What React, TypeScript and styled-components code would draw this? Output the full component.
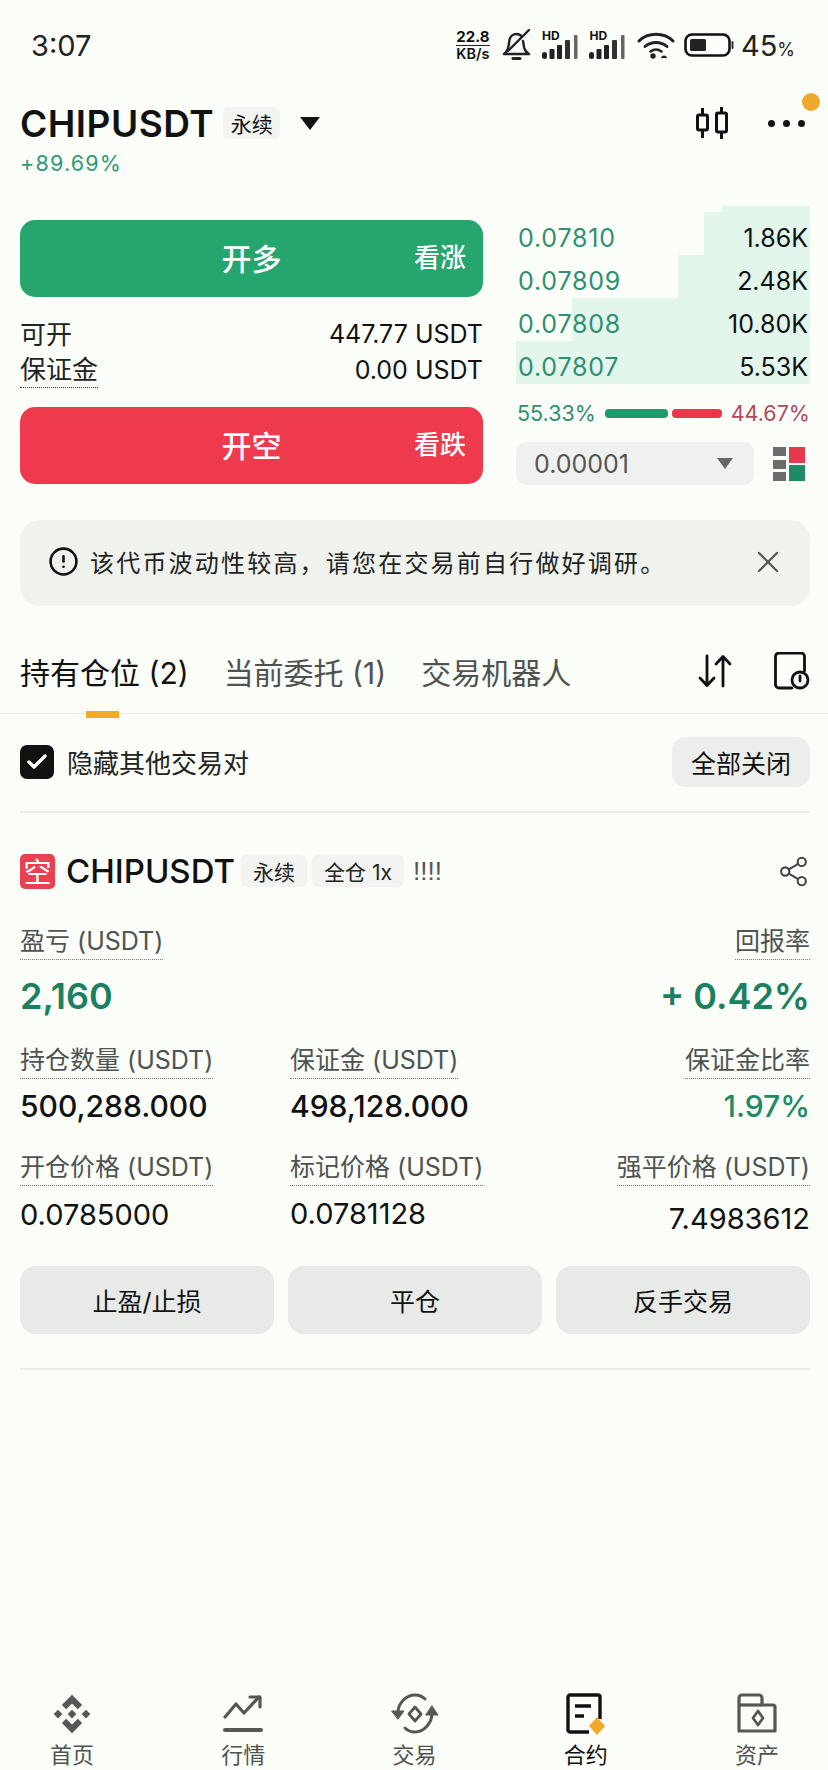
import React from 'react';
import styled, { createGlobalStyle } from 'styled-components';
import { Check, CircleAlert, Share2, X } from 'lucide-react';

const GlobalStyle = createGlobalStyle`
  html, body {
    margin: 0;
    padding: 0;
    background: #fbfdf9;
  }

  body {
    font-family: Inter, 'Noto Sans CJK SC', sans-serif;
    color: #111;
  }
`;

const GREEN = '#1f8a66';
const TEXT_GREY = '#4f5350';

const depthRows = [
  { price: '0.07810', size: '1.86K', depth: 36 },
  { price: '0.07809', size: '2.48K', depth: 45 },
  { price: '0.07808', size: '10.80K', depth: 81 },
  { price: '0.07807', size: '5.53K', depth: 100 },
];

const navItems = ['首页', '行情', '交易', '合约', '资产'];

function SignalIcon() {
  return (
    <svg width="38" height="24" viewBox="0 0 38 24">
      <rect x="0" y="17" width="5" height="7" rx="2.500" fill="#222" />
      <rect x="7.500" y="14" width="5" height="10" rx="1" fill="#222" />
      <rect x="15" y="10" width="5" height="14" rx="1" fill="#222" />
      <rect x="23" y="5" width="5" height="19" rx="1" fill="#333" />
      <rect x="32" y="0" width="3.500" height="24" rx="1" fill="#666" />
    </svg>
  );
}

function BellOffIcon() {
  return (
    <svg width="30" height="32" viewBox="0 0 30 32" fill="none" stroke="#222" strokeWidth="2.400" strokeLinecap="round" strokeLinejoin="round">
      <path d="M2 25c3-2 4-4 4.500-8l1-6c.6-3.500 3.500-6 7-6 2 0 3.500.7 5 2M21 12l1 6c.5 3 2 5 5 7H2" />
      <path d="M11 29.500h7" strokeWidth="3" />
      <path d="M6 22 27 1" />
    </svg>
  );
}

function WifiIcon() {
  return (
    <svg width="38" height="28" viewBox="0 0 38 28" fill="none" stroke="#222" strokeWidth="3" strokeLinecap="round">
      <path d="M2 10C11 1 27 1 36 10" />
      <path d="M8 15.500c6-5.500 16-5.500 22 0" />
      <path d="M13.500 20.500c3.500-2.500 7.500-2.500 11 0" strokeWidth="2.600" />
      <circle cx="16" cy="25" r="2.700" fill="#222" stroke="none" />
      <path d="M24 27c0-3.500 6-3.500 6 0z" fill="#222" stroke="none" />
    </svg>
  );
}

function BatteryIcon() {
  return (
    <svg width="50" height="24" viewBox="0 0 50 24" fill="none">
      <rect x="1.500" y="1.500" width="44" height="21" rx="6.500" stroke="#111" strokeWidth="2.600" />
      <rect x="6" y="6" width="16" height="12" rx="1.500" fill="#222" />
      <path d="M48.500 9v6" stroke="#333" strokeWidth="2" strokeLinecap="round" />
    </svg>
  );
}

function CandleIcon() {
  return (
    <svg width="32" height="34" viewBox="0 0 32 34" fill="none" stroke="#111" strokeWidth="3">
      <rect x="1.500" y="9" width="10" height="15" rx="1.500" />
      <rect x="20.500" y="7" width="10" height="19" rx="1.500" />
      <path d="M6.500 2v7M6.500 24v8M25.500 1v6M25.500 26v7" />
    </svg>
  );
}

function SortIcon() {
  return (
    <svg width="34" height="36" viewBox="0 0 34 36" fill="none" stroke="#111" strokeWidth="2.800" strokeLinecap="round" strokeLinejoin="round">
      <path d="M9 3v29M2 25l7 7.500 7-7.500" />
      <path d="M25 33V4M18 11l7-7.500 7 7.500" />
    </svg>
  );
}

function HistoryIcon() {
  return (
    <svg width="36" height="38" viewBox="0 0 36 38" fill="none" stroke="#111" strokeWidth="2.800" strokeLinecap="round">
      <path d="M18 36H5a3.500 3.500 0 0 1-3.500-3.500v-28A3.500 3.500 0 0 1 5 1h22a3.500 3.500 0 0 1 3.500 3.500V19" />
      <circle cx="26" cy="28" r="8" />
      <path d="M26 24v5" />
    </svg>
  );
}

function LayoutIcon() {
  return (
    <svg width="33" height="34" viewBox="0 0 33 34">
      <rect x="0" y="0" width="13" height="9" fill="#6b6d6b" />
      <rect x="0" y="13" width="13" height="9" fill="#6b6d6b" />
      <rect x="0" y="25" width="13" height="9" fill="#6b6d6b" />
      <rect x="16" y="0" width="16" height="16" fill="#e8394a" />
      <rect x="16" y="18" width="16" height="16" fill="#1f8a66" />
    </svg>
  );
}

function HomeIcon() {
  return (
    <svg width="42" height="42" viewBox="0 0 24 24" fill="#555755">
      <path d="M12 1 17.800 6.800 15.300 9.300 12 6 8.700 9.300 6.200 6.800Z" />
      <path d="M12 23 17.800 17.200 15.300 14.700 12 18 8.700 14.700 6.200 17.200Z" />
      <path d="M12 9.500 14.500 12 12 14.500 9.500 12Z" />
      <path d="M4 9.500 6.500 12 4 14.500 1.500 12Z" />
      <path d="M20 9.500 22.500 12 20 14.500 17.500 12Z" />
    </svg>
  );
}

function MarketIcon() {
  return (
    <svg width="42" height="42" viewBox="0 0 42 42" fill="none" stroke="#555755" strokeWidth="3.200" strokeLinecap="round" strokeLinejoin="round">
      <path d="M3 24 14 11l8 9L37 4" />
      <path d="M28 4h10v10" />
      <path d="M3 37h36" strokeWidth="4" />
    </svg>
  );
}

function TradeIcon() {
  return (
    <svg width="50" height="42" viewBox="0 0 50 42" fill="none" stroke="#555755" strokeWidth="3" strokeLinecap="round" strokeLinejoin="round">
      <path d="M8 20C8 10 16 2 25 2c4 0 7 1 10 4" />
      <path d="M42 20c0 10-8 19-17 19-4 0-7-1-10-4" />
      <path d="M2 18h12l-6 8zM36 22h12l-6-9z" fill="#555755" strokeWidth="1" />
      <path d="M25 14l6 7-6 7-6-7z" strokeWidth="2.800" />
    </svg>
  );
}

function FuturesIcon() {
  return (
    <svg width="42" height="42" viewBox="0 0 42 42" fill="none">
      <path d="M24 39H5a2 2 0 0 1-2-2V4a2 2 0 0 1 2-2h28a2 2 0 0 1 2 2v22" stroke="#111" strokeWidth="3.400" />
      <path d="M10 13h16M10 23h9" stroke="#111" strokeWidth="3.600" />
      <path d="M32 24l8 9-8 9-8-9z" fill="#efaa2c" />
    </svg>
  );
}

function AssetsIcon() {
  return (
    <svg width="42" height="42" viewBox="0 0 42 42" fill="none" stroke="#555755" strokeWidth="3.200" strokeLinejoin="round">
      <path d="M3 38V5a3 3 0 0 1 3-3h17a3 3 0 0 1 3 3v7h11a2 2 0 0 1 2 2v24z" />
      <path d="M3 12h23" />
      <path d="M22 18l5 7-5 7-5-7z" strokeWidth="2.800" />
    </svg>
  );
}

const navIcons = [<HomeIcon />, <MarketIcon />, <TradeIcon />, <FuturesIcon />, <AssetsIcon />];

function App() {
  return (
    <Page>
      <GlobalStyle />

      <StatusBar>
        <Clock>3:07</Clock>
        <StatusIcons>
          <NetSpeed>
            <b>22.8</b>
            <span>KB/s</span>
          </NetSpeed>
          <BellOffIcon />
          <Signal>
            <SignalLabel>HD</SignalLabel>
            <SignalIcon />
          </Signal>
          <Signal>
            <SignalLabel>HD</SignalLabel>
            <SignalIcon />
          </Signal>
          <WifiIcon />
          <BatteryIcon />
          <BatteryLevel>
            45<small>%</small>
          </BatteryLevel>
        </StatusIcons>
      </StatusBar>

      <Header>
        <TitleRow>
          <Title>CHIPUSDT</Title>
          <PerpTag>永续</PerpTag>
          <Caret />
          <HeaderActions>
            <CandleIcon />
            <MoreButton>
              <Dot />
              <Dot />
              <Dot />
              <Badge />
            </MoreButton>
          </HeaderActions>
        </TitleRow>
        <Change>+89.69%</Change>
      </Header>

      <TradePanel>
        <OrderColumn>
          <TradeButton $color="#27a56f">
            开多
            <Hint>看涨</Hint>
          </TradeButton>
          <InfoList>
            <InfoRow>
              <PlainLabel>可开</PlainLabel>
              <InfoValue>447.77 USDT</InfoValue>
            </InfoRow>
            <InfoRow>
              <DottedLabel>保证金</DottedLabel>
              <InfoValue>0.00 USDT</InfoValue>
            </InfoRow>
          </InfoList>
          <TradeButton $color="#ee3a4c">
            开空
            <Hint>看跌</Hint>
          </TradeButton>
        </OrderColumn>

        <BookColumn>
          <DepthList>
            {depthRows.map((row) => (
              <DepthRow key={row.price} $depth={row.depth}>
                <Price>{row.price}</Price>
                <Size>{row.size}</Size>
              </DepthRow>
            ))}
          </DepthList>
          <RatioRow>
            <RatioText $color="#2f8f70">55.33%</RatioText>
            <RatioBar $color="#1f9a6d" $width={63} />
            <RatioBar $color="#e8394a" $width={50} />
            <RatioText $color="#b04a5c">44.67%</RatioText>
          </RatioRow>
          <BookControls>
            <PrecisionSelect>
              0.00001
              <SelectCaret />
            </PrecisionSelect>
            <LayoutIcon />
          </BookControls>
        </BookColumn>
      </TradePanel>

      <Notice>
        <CircleAlert size={31} strokeWidth={2} color="#111" />
        <NoticeText>该代币波动性较高，请您在交易前自行做好调研。</NoticeText>
        <X size={36} strokeWidth={1.5} color="#555" />
      </Notice>

      <Tabs>
        <Tab $active>持有仓位 (2)</Tab>
        <Tab>当前委托 (1)</Tab>
        <Tab>交易机器人</Tab>
        <TabActions>
          <SortIcon />
          <HistoryIcon />
        </TabActions>
      </Tabs>

      <FilterRow>
        <Checkbox>
          <Check size={24} strokeWidth={3.4} color="#fff" />
        </Checkbox>
        <FilterLabel>隐藏其他交易对</FilterLabel>
        <CloseAll>全部关闭</CloseAll>
      </FilterRow>

      <Position>
        <PositionHead>
          <SideBadge>空</SideBadge>
          <PositionName>CHIPUSDT</PositionName>
          <PositionTag>永续</PositionTag>
          <PositionTag>全仓 1x</PositionTag>
          <Warning>!!!!</Warning>
          <ShareButton>
            <Share2 size={33} strokeWidth={1.5} color="#444" />
          </ShareButton>
        </PositionHead>

        <PnlRow>
          <Stat>
            <StatLabel>盈亏 (USDT)</StatLabel>
            <PnlValue>2,160</PnlValue>
          </Stat>
          <Stat $right>
            <StatLabel>回报率</StatLabel>
            <PnlValue>+ 0.42%</PnlValue>
          </Stat>
        </PnlRow>

        <StatGrid>
          <Stat>
            <StatLabel>持仓数量 (USDT)</StatLabel>
            <AmountValue>500,288.000</AmountValue>
          </Stat>
          <Stat>
            <StatLabel>保证金 (USDT)</StatLabel>
            <AmountValue>498,128.000</AmountValue>
          </Stat>
          <Stat $right>
            <StatLabel>保证金比率</StatLabel>
            <AmountValue $green>1.97%</AmountValue>
          </Stat>
          <Stat>
            <StatLabel>开仓价格 (USDT)</StatLabel>
            <PriceValue>0.0785000</PriceValue>
          </Stat>
          <Stat>
            <StatLabel>标记价格 (USDT)</StatLabel>
            <PriceValue $gap={8}>0.0781128</PriceValue>
          </Stat>
          <Stat $right>
            <StatLabel>强平价格 (USDT)</StatLabel>
            <PriceValue $gap={13}>7.4983612</PriceValue>
          </Stat>
        </StatGrid>

        <ActionRow>
          <ActionButton>止盈/止损</ActionButton>
          <ActionButton>平仓</ActionButton>
          <ActionButton>反手交易</ActionButton>
        </ActionRow>
      </Position>

      <BottomNav>
        {navItems.map((label, index) => (
          <NavItem key={label} $active={index === 3}>
            <NavIcon>{navIcons[index]}</NavIcon>
            {label}
          </NavItem>
        ))}
      </BottomNav>
    </Page>
  );
}

// Styles
const Page = styled.div`
  display: flex;
  flex-direction: column;
  width: 828px;
  height: 1770px;
  overflow: hidden;
  background: #fbfdf9;
`;

const StatusBar = styled.div`
  display: flex;
  align-items: center;
  justify-content: space-between;
  height: 90px;
  padding: 0 33px 0 31px;
  box-sizing: border-box;
`;

const Clock = styled.div`
  font-size: 29px;
  color: #222;
`;

const StatusIcons = styled.div`
  display: flex;
  align-items: center;
  gap: 9.500px;
`;

const NetSpeed = styled.div`
  display: flex;
  flex-direction: column;
  align-items: center;
  width: 40px;
  font-size: 14.500px;
  line-height: 15px;
  font-weight: 600;

  b {
    font-weight: 700;
    font-size: 15px;
    line-height: 16px;
    border-bottom: 1px solid #222;
  }
`;

const Signal = styled.div`
  position: relative;
  display: flex;
  align-items: flex-end;
  height: 28px;
`;

const SignalLabel = styled.span`
  position: absolute;
  top: -3px;
  left: 0;
  font-size: 12px;
  font-weight: 700;
`;

const BatteryLevel = styled.div`
  font-size: 29px;
  color: #222;
  margin-left: -3px;

  small {
    font-size: 18px;
  }
`;

const Header = styled.header`
  padding: 10px 18px 0 20px;
  height: 115px;
  box-sizing: border-box;
`;

const TitleRow = styled.div`
  display: flex;
  align-items: center;
  height: 46px;
`;

const Title = styled.h1`
  margin: 0;
  font-size: 37px;
  font-weight: 600;
  letter-spacing: 0.5px;
  color: #111;
`;

const PerpTag = styled.span`
  display: flex;
  align-items: center;
  justify-content: center;
  width: 57px;
  height: 32px;
  margin-left: 9px;
  border-radius: 6px;
  background: #f3f4f1;
  font-size: 21px;
`;

const Caret = styled.span`
  width: 0;
  height: 0;
  margin-left: 20px;
  border-left: 10.500px solid transparent;
  border-right: 10.500px solid transparent;
  border-top: 13px solid #111;
`;

const HeaderActions = styled.div`
  display: flex;
  align-items: center;
  gap: 40px;
  margin-left: auto;
  padding-right: 5px;
`;

const MoreButton = styled.div`
  position: relative;
  display: flex;
  gap: 8px;
`;

const Dot = styled.span`
  width: 7px;
  height: 7px;
  border-radius: 50%;
  background: #111;
`;

const Badge = styled.span`
  position: absolute;
  top: -27px;
  right: -15px;
  width: 18px;
  height: 18px;
  border-radius: 50%;
  background: #efaa2c;
`;

const Change = styled.div`
  margin-top: 4px;
  font-size: 21.500px;
  line-height: 26px;
  letter-spacing: 1.200px;
  color: #2f9a76;
`;

const TradePanel = styled.section`
  display: grid;
  grid-template-columns: 463px 294px;
  column-gap: 33px;
  padding: 0 18px 0 20px;
`;

const OrderColumn = styled.div`
  padding-top: 15px;
`;

const TradeButton = styled.button<{ $color: string }>`
  position: relative;
  display: block;
  width: 100%;
  height: 77px;
  padding: 0 0 4px;
  border: 0;
  border-radius: 15px;
  background: ${(p) => p.$color};
  color: #fff;
  font-family: inherit;
  font-size: 30px;
  font-weight: 500;
`;

const Hint = styled.span`
  position: absolute;
  top: 50%;
  right: 17px;
  transform: translateY(-60%);
  font-size: 26px;
`;

const InfoList = styled.div`
  padding: 19px 0;
`;

const InfoRow = styled.div`
  display: flex;
  align-items: center;
  justify-content: space-between;
  height: 36px;
  font-size: 26px;
  color: #222;
`;

const PlainLabel = styled.span`
  padding-bottom: 4px;
`;

const InfoValue = styled.span`
  font-size: 25px;
  color: #111;
`;

const DottedLabel = styled.span`
  line-height: 35px;
  border-bottom: 1px dotted #333;
`;

const BookColumn = styled.div`
  padding-top: 1px;
`;

const DepthList = styled.div`
  display: flex;
  flex-direction: column;
`;

const DepthRow = styled.div<{ $depth: number }>`
  display: flex;
  align-items: flex-end;
  justify-content: space-between;
  height: 43px;
  padding-bottom: 4px;
  box-sizing: border-box;
  background: linear-gradient(to left, #e2f6ec ${(p) => p.$depth}%, transparent 0);

  &:first-child {
    height: 49px;
    background:
      linear-gradient(to left, #e2f6ec 30%, transparent 0) top / 100% 6px no-repeat,
      linear-gradient(to left, #e2f6ec ${(p) => p.$depth}%, transparent 0) bottom / 100% 43px no-repeat;
  }
`;

const Price = styled.span`
  padding-left: 2px;
  font-size: 25px;
  line-height: 26px;
  letter-spacing: 0.8px;
  color: #2f8f70;
`;

const Size = styled.span`
  padding-right: 2px;
  font-size: 25px;
  line-height: 26px;
  color: #111;
`;

const RatioRow = styled.div`
  display: flex;
  align-items: center;
  gap: 4px;
  height: 24px;
  margin-top: 17px;
`;

const RatioText = styled.span<{ $color: string }>`
  font-size: 21.500px;
  color: ${(p) => p.$color};

  &:first-child {
    margin-right: 5px;
    padding-left: 1px;
  }

  &:last-child {
    margin-left: auto;
  }
`;

const RatioBar = styled.span<{ $color: string; $width: number }>`
  width: ${(p) => p.$width}px;
  height: 9px;
  border-radius: 4px;
  background: ${(p) => p.$color};
`;

const BookControls = styled.div`
  display: flex;
  align-items: center;
  justify-content: space-between;
  margin-top: 17px;
  padding-right: 4px;
`;

const PrecisionSelect = styled.div`
  display: flex;
  align-items: center;
  justify-content: space-between;
  width: 238px;
  height: 43px;
  padding: 0 21px 0 18px;
  box-sizing: border-box;
  border-radius: 10px;
  background: #eff1ee;
  font-size: 25px;
  color: #555;
`;

const SelectCaret = styled.span`
  width: 0;
  height: 0;
  border-left: 8px solid transparent;
  border-right: 8px solid transparent;
  border-top: 11px solid #666;
`;

const Notice = styled.div`
  display: flex;
  align-items: center;
  height: 86px;
  margin: 35px 18px 0 20px;
  padding: 0 24px 3px 28px;
  box-sizing: border-box;
  border-radius: 20px;
  background: #f0f2ee;
`;

const NoticeText = styled.p`
  flex: 1;
  margin: 0 0 0 11px;
  font-size: 24px;
  letter-spacing: 2.200px;
  color: #222;
`;

const Tabs = styled.nav`
  display: flex;
  align-items: center;
  gap: 35px;
  height: 80px;
  margin-top: 28px;
  padding: 0 18px 6px 20px;
  box-sizing: border-box;
  border-bottom: 1px solid #e8ece8;
`;

const Tab = styled.div<{ $active?: boolean }>`
  position: relative;
  font-size: 30px;
  color: ${(p) => (p.$active ? '#111' : TEXT_GREY)};

  ${(p) =>
    p.$active &&
    `
    &::after {
      content: '';
      position: absolute;
      left: 66px;
      bottom: -25px;
      width: 33px;
      height: 7px;
      background: #efaa2c;
    }
  `}
`;

const TabActions = styled.div`
  display: flex;
  align-items: center;
  gap: 42px;
  margin-left: auto;
`;

const FilterRow = styled.div`
  display: flex;
  align-items: center;
  height: 99px;
  margin: 0 18px 0 20px;
  padding-bottom: 2px;
  box-sizing: border-box;
  border-bottom: 2px solid #eceeea;
`;

const Checkbox = styled.span`
  display: flex;
  align-items: center;
  justify-content: center;
  width: 34px;
  height: 34px;
  border-radius: 7px;
  background: #111;
`;

const FilterLabel = styled.span`
  margin-left: 13px;
  font-size: 26px;
  color: #222;
`;

const CloseAll = styled.button`
  width: 138px;
  height: 50px;
  margin-left: auto;
  padding: 0;
  border: 0;
  border-radius: 14px;
  background: #eceeeb;
  font-family: inherit;
  font-size: 25px;
  color: #111;
`;

const Position = styled.section`
  padding: 40px 18px 0 20px;
`;

const PositionHead = styled.div`
  display: flex;
  align-items: center;
  height: 36px;
`;

const SideBadge = styled.span`
  display: flex;
  align-items: center;
  justify-content: center;
  width: 35px;
  height: 35px;
  border-radius: 5px;
  background: #e8414f;
  color: #fff;
  font-size: 28px;
`;

const PositionName = styled.span`
  margin-left: 11px;
  font-size: 33px;
  font-weight: 500;
`;

const PositionTag = styled.span`
  display: flex;
  align-items: center;
  height: 30px;
  margin-left: 7px;
  padding: 0 11px;
  border-radius: 5px;
  background: #f3f4f1;
  box-shadow: 0 0 2px #d8dad6;
  font-size: 21px;
  color: #222;
`;

const Warning = styled.span`
  margin-left: 10px;
  font-family: 'Liberation Sans', sans-serif;
  font-size: 26px;
  color: #555;
`;

const ShareButton = styled.span`
  display: flex;
  margin-left: auto;
`;

const PnlRow = styled.div`
  display: flex;
  justify-content: space-between;
  margin-top: 35px;
`;

const StatGrid = styled.div`
  display: grid;
  grid-template-columns: 270px 1fr 1fr;
  margin-top: 23px;
  row-gap: 24px;
`;

const Stat = styled.div<{ $right?: boolean }>`
  display: flex;
  flex-direction: column;
  align-items: ${(p) => (p.$right ? 'flex-end' : 'flex-start')};
`;

const StatLabel = styled.span`
  font-size: 25px;
  line-height: 35px;
  white-space: nowrap;
  border-bottom: 1px dotted #777;
  color: ${TEXT_GREY};
`;

const PnlValue = styled.div`
  margin-top: 12px;
  font-size: 36px;
  line-height: 48px;
  font-weight: 600;
  color: #1c7f5f;
`;

const AmountValue = styled.div<{ $green?: boolean }>`
  margin-top: 7px;
  font-size: 30px;
  line-height: 40px;
  font-weight: 500;
  color: ${(p) => (p.$green ? GREEN : '#111')};
`;

const PriceValue = styled.div<{ $gap?: number }>`
  margin-top: ${(p) => p.$gap ?? 9}px;
  font-size: 29px;
  line-height: 40px;
  color: #111;
`;

const ActionRow = styled.div`
  display: grid;
  grid-template-columns: repeat(3, 1fr);
  gap: 14px;
  margin-top: 27px;
  padding-bottom: 34px;
  border-bottom: 2px solid #eceeea;
`;

const ActionButton = styled.button`
  height: 68px;
  padding: 0;
  border: 0;
  border-radius: 16px;
  background: #e8eae7;
  font-family: inherit;
  font-size: 25px;
  color: #111;
`;

const BottomNav = styled.nav`
  display: flex;
  justify-content: space-between;
  margin-top: auto;
  padding: 0 21px 0 22px;
`;

const NavItem = styled.div<{ $active?: boolean }>`
  display: flex;
  flex-direction: column;
  align-items: center;
  width: 100px;
  font-size: 22px;
  line-height: 30px;
  color: ${(p) => (p.$active ? '#111' : TEXT_GREY)};
`;

const NavIcon = styled.div`
  display: flex;
  align-items: center;
  justify-content: center;
  height: 42px;
  margin-bottom: 5px;
`;

export default App;
